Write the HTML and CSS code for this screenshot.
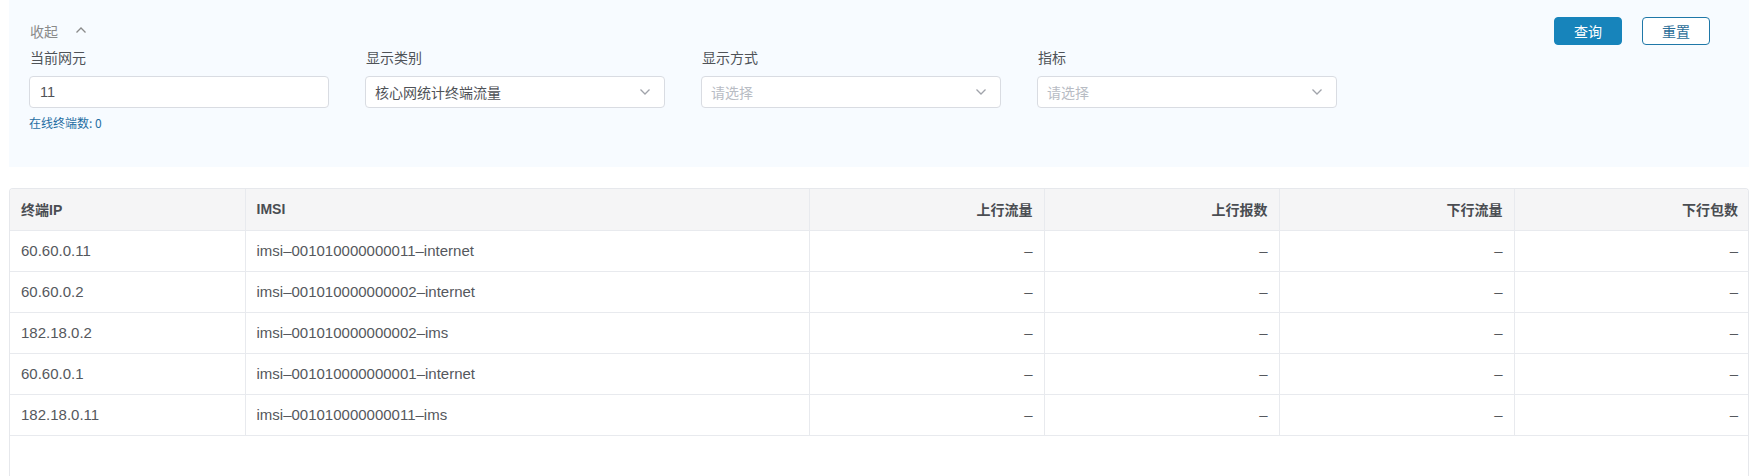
FILE: index.html
```html
<!DOCTYPE html>
<html lang="zh-CN">
<head>
<meta charset="utf-8">
<title>终端流量</title>
<link rel="stylesheet" href="styles.css">
</head>
<body>
<div class="page">
  <section class="filter-panel">
    <div class="panel-top">
      <div class="collapse-toggle">
        <span>收起</span>
        <svg class="chev-up" width="12" height="8" viewBox="0 0 12 8"><path d="M1.5 6.5 L6 2 L10.5 6.5" fill="none" stroke="#8a8a8a" stroke-width="1.3"/></svg>
      </div>
      <div class="actions">
        <button class="btn btn-primary">查询</button>
        <button class="btn btn-plain">重置</button>
      </div>
    </div>
    <div class="form-grid">
      <div class="field">
        <label class="field-label">当前网元</label>
        <div class="control"><span class="value">11</span></div>
        <div class="hint">在线终端数: 0</div>
      </div>
      <div class="field">
        <label class="field-label">显示类别</label>
        <div class="control select"><span class="value">核心网统计终端流量</span>
          <svg class="chev-down" width="12" height="8" viewBox="0 0 12 8"><path d="M1.5 1.5 L6 6 L10.5 1.5" fill="none" stroke="#a0a3aa" stroke-width="1.3"/></svg>
        </div>
      </div>
      <div class="field">
        <label class="field-label">显示方式</label>
        <div class="control select"><span class="placeholder">请选择</span>
          <svg class="chev-down" width="12" height="8" viewBox="0 0 12 8"><path d="M1.5 1.5 L6 6 L10.5 1.5" fill="none" stroke="#a0a3aa" stroke-width="1.3"/></svg>
        </div>
      </div>
      <div class="field">
        <label class="field-label">指标</label>
        <div class="control select"><span class="placeholder">请选择</span>
          <svg class="chev-down" width="12" height="8" viewBox="0 0 12 8"><path d="M1.5 1.5 L6 6 L10.5 1.5" fill="none" stroke="#a0a3aa" stroke-width="1.3"/></svg>
        </div>
      </div>
    </div>
  </section>

  <section class="table-wrap">
    <table class="data-table">
      <colgroup>
        <col class="c-ip"><col class="c-imsi"><col class="c-num"><col class="c-num"><col class="c-num"><col class="c-num">
      </colgroup>
      <thead>
        <tr><th>终端IP</th><th>IMSI</th><th class="r">上行流量</th><th class="r">上行报数</th><th class="r">下行流量</th><th class="r">下行包数</th></tr>
      </thead>
      <tbody>
        <tr><td>60.60.0.11</td><td>imsi–001010000000011–internet</td><td class="r">–</td><td class="r">–</td><td class="r">–</td><td class="r">–</td></tr>
        <tr><td>60.60.0.2</td><td>imsi–001010000000002–internet</td><td class="r">–</td><td class="r">–</td><td class="r">–</td><td class="r">–</td></tr>
        <tr><td>182.18.0.2</td><td>imsi–001010000000002–ims</td><td class="r">–</td><td class="r">–</td><td class="r">–</td><td class="r">–</td></tr>
        <tr><td>60.60.0.1</td><td>imsi–001010000000001–internet</td><td class="r">–</td><td class="r">–</td><td class="r">–</td><td class="r">–</td></tr>
        <tr><td>182.18.0.11</td><td>imsi–001010000000011–ims</td><td class="r">–</td><td class="r">–</td><td class="r">–</td><td class="r">–</td></tr>
      </tbody>
    </table>
  </section>
</div>
</body>
</html>
```

FILE: styles.css
```css
* { box-sizing: border-box; }
html, body { margin: 0; padding: 0; background: #ffffff; overflow: hidden; }
body {
  font-family: "Liberation Sans", "Noto Sans CJK SC", sans-serif;
  font-size: 14px;
  color: #606266;
}
.page { padding: 0 9px; }

.filter-panel {
  background: #f7fbff;
  height: 167px;
  padding: 17px 39px 0 20px;
}
.panel-top {
  display: flex;
  justify-content: space-between;
  align-items: center;
  height: 28px;
}
.collapse-toggle {
  display: flex;
  align-items: center;
  gap: 17px;
  padding-left: 1px;
  color: #8a8a8a;
  font-size: 14px;
  font-family: "Noto Sans CJK SC", sans-serif;
}
.chev-up { margin-top: -2px; }
.actions { display: flex; gap: 20px; }
.btn {
  width: 68px;
  height: 28px;
  border-radius: 4px;
  font-size: 14px;
  font-family: "Noto Sans CJK SC", sans-serif;
  padding: 0;
  cursor: pointer;
}
.btn-primary { background: #1784bb; border: 1px solid #1784bb; color: #ffffff; }
.btn-plain { background: #ffffff; border: 1px solid #1f78a8; color: #2b6e98; }

.form-grid {
  display: grid;
  grid-template-columns: repeat(4, 300px);
  column-gap: 36px;
  margin-top: 2px;
}
.field-label {
  display: block;
  height: 20px;
  line-height: 20px;
  color: #4f5358;
  font-family: "Noto Sans CJK SC", sans-serif;
  font-size: 14px;
  padding-left: 1px;
}
.control {
  margin-top: 9px;
  height: 32px;
  background: #ffffff;
  border: 1px solid #d9dce2;
  border-radius: 4px;
  display: flex;
  align-items: center;
  justify-content: space-between;
  padding: 0 13px 0 9px;
}
.value { color: #4f5257; font-size: 14px; font-family: "Liberation Sans", "Noto Sans CJK SC", sans-serif; }
.field:first-child .value { padding-left: 1px; font-size: 14.5px; }
.placeholder { color: #b8bcc4; font-family: "Noto Sans CJK SC", sans-serif; }
.hint {
  margin-top: 7px;
  font-size: 12px;
  line-height: 16px;
  color: #1f6ea3;
  font-family: "Noto Sans CJK SC", sans-serif;
}

.table-wrap {
  margin-top: 21px;
  height: 320px;
  border: 1px solid #e6e8ec;
  border-bottom: none;
  border-radius: 4px 4px 0 0;
  overflow: hidden;
}
.data-table {
  width: 100%;
  border-collapse: collapse;
  table-layout: fixed;
}
.c-ip { width: 235px; }
.c-imsi { width: 564px; }
.c-num { width: 235px; }
.data-table th,
.data-table td {
  height: 41px;
  padding: 0 11px;
  border-bottom: 1px solid #e8eaee;
  border-right: 1px solid #e8eaee;
  text-align: left;
  white-space: nowrap;
}
.data-table th:last-child,
.data-table td:last-child { border-right: none; }
.data-table th {
  background: #f5f5f6;
  color: #4a4d52;
  font-weight: 600;
  font-size: 14px;
}
.data-table td {
  font-size: 15px;
  color: #55585d;
}
.data-table .r { text-align: right; }
```
